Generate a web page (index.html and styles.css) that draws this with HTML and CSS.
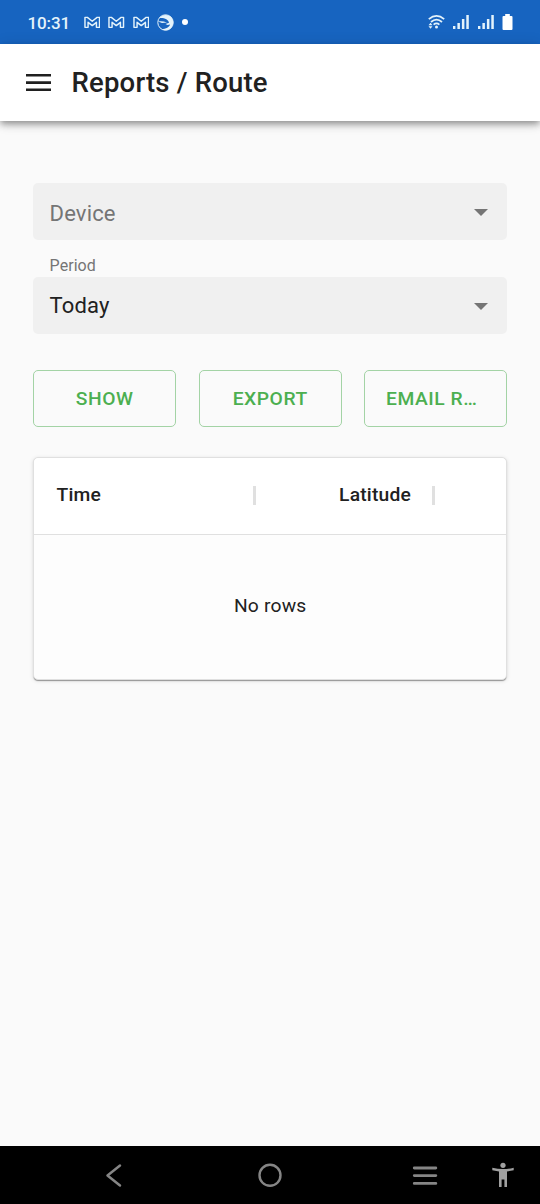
FILE: index.html
```
<!DOCTYPE html>
<html lang="en">
<head>
<meta charset="utf-8">
<title>Reports / Route</title>
<link rel="stylesheet" href="styles.css">
</head>
<body>
<div class="screen">
  <div class="status">
    <span class="clock">10:31</span>
    <div class="notifications">
      <svg class="mail" viewBox="0 0 17 13"><path d="M1 11.500V1.200h2.500l5 4 5-4H16v10.300h-3.200V6.300L8.500 9.700 4.200 6.300v5.200z"/></svg>
      <svg class="mail" viewBox="0 0 17 13"><path d="M1 11.500V1.200h2.500l5 4 5-4H16v10.300h-3.200V6.300L8.500 9.700 4.200 6.300v5.200z"/></svg>
      <svg class="mail" viewBox="0 0 17 13"><path d="M1 11.500V1.200h2.500l5 4 5-4H16v10.300h-3.200V6.300L8.500 9.700 4.200 6.300v5.200z"/></svg>
      <svg class="globe" viewBox="0 0 17 17"><circle cx="8.500" cy="8.500" r="7.700" fill="none" stroke="#e4f3fb" stroke-width="1"/><path d="M2.500 4C5 .5 11 0 14.500 3.500 17.500 7.500 16.500 12 13 15 10.500 16.800 7 16.600 4.500 15 9 15 12.500 13 13 10.500L10.500 11 8.500 10 12 8.800C11.500 5.200 7 3.500 2.500 4z" fill="#e4f3fb"/><path d="M1 7.500Q5 6.700 10 8.500L5 9z" fill="#e4f3fb"/></svg>
      <span class="dot"></span>
    </div>
    <div class="system">
      <svg class="wifi" viewBox="0 0 17 16"><g fill="none" stroke="#e4f3fb" stroke-width="1.800"><path d="M.8 5.100Q8.500-1.300 16.200 5.100"/><path d="M3 8Q8.500 3.300 14 8"/><path d="M5.600 10.600Q8.500 8.200 11.400 10.600"/></g><circle cx="8.500" cy="13" r="1.500" fill="#e4f3fb"/><path d="M2.500 8.700l2 2.500h-4zM2.500 14.800l-2-2.500h4z" fill="#e4f3fb"/></svg>
      <svg class="signal" viewBox="0 0 17 16"><path d="M0 12h2.400v3H0zM4.400 9h2.500v6H4.400zM8.900 5h2.500v10H8.900zM13.300 1h2.500v14h-2.500z"/></svg>
      <svg class="signal second" viewBox="0 0 17 16"><path d="M0 12h2.400v3H0zM4.400 9h2.500v6H4.400zM8.900 5h2.500v10H8.900zM13.300 1h2.500v14h-2.500z"/></svg>
      <svg class="battery" viewBox="0 0 11 18"><path d="M3.200 1h4.600v2H9.500q1 0 1 1v12q0 1-1 1h-8q-1 0-1-1V4q0-1 1-1h1.700z" fill="#fff"/></svg>
    </div>
  </div>
  <header class="appbar">
    <svg class="menu" viewBox="0 0 26 18"><path d="M0 0h25v2.600H0zM0 7.300h25v2.600H0zM0 14.500h25v2.600H0z" fill="#202020"/></svg>
    <h1 class="title">Reports / Route</h1>
  </header>
  <main class="content">
    <div class="field device"><span class="placeholder">Device</span><svg class="caret" viewBox="0 0 14 7"><path d="M0 0h14L7 7z"/></svg></div>
    <div class="label">Period</div>
    <div class="field period"><span>Today</span><svg class="caret" viewBox="0 0 14 7"><path d="M0 0h14L7 7z"/></svg></div>
    <div class="actions">
      <button class="button"><span class="caption">Show</span></button>
      <button class="button"><span class="caption">Export</span></button>
      <button class="button clipped"><span class="caption">Email R…</span></button>
    </div>
    <section class="card">
      <div class="columns">
        <div class="column time">Time<span class="separator"></span></div>
        <div class="column latitude">Latitude<span class="separator"></span></div>
      </div>
      <div class="empty">No rows</div>
    </section>
  </main>
  <nav class="navbar">
    <svg class="nav-icons" viewBox="0 0 540 58">
      <path d="M120 19.500l-12.500 10L120 39.500" fill="none" stroke="#858585" stroke-width="2.500" stroke-linecap="round" stroke-linejoin="round"/>
      <circle cx="270" cy="29.300" r="10.500" fill="none" stroke="#858585" stroke-width="2.400"/>
      <path d="M414.300 22h21.500M414.300 29.600h21.500M414.300 37.400h21.500" fill="none" stroke="#858585" stroke-width="2.900" stroke-linecap="round"/>
      <g fill="#a0a0a0"><circle cx="503" cy="19.300" r="2.600"/><path d="M492.300 21.700Q503 24.500 513.700 21.700V24.200L507 25.500V41h-2.600v-7.500h-2.800V41H499V25.500L492.300 24.200z"/></g>
    </svg>
  </nav>
</div>
</body>
</html>
```
FILE: styles.css
```
* { box-sizing: border-box; }
body { margin: 0; font-family: Roboto, sans-serif; color: #212121; background: #fafafa; }
svg { display: block; flex: none; }
.screen { width: 540px; height: 1204px; display: flex; flex-direction: column; overflow: hidden; }
.status { height: 44px; flex: none; background: #1764c0; color: #e4f3fb; display: flex; align-items: center; padding: 0 27.500px; }
.clock { width: 56px; font-size: 17px; line-height: 20px; letter-spacing: -.1px; font-weight: 500; padding-top: 1px; }
.notifications { display: flex; align-items: center; gap: 8px; }
.mail { width: 16.500px; height: 13px; }
.mail path { fill: none; stroke: #e4f3fb; stroke-width: 1.500; stroke-linejoin: round; }
.globe { width: 17px; height: 17px; margin-left: -.5px; }
.dot { width: 6px; height: 6px; border-radius: 50%; background: #fff; }
.system { display: flex; align-items: center; margin-left: auto; }
.wifi { width: 17px; height: 16px; margin-right: 8px; }
.signal { width: 17px; height: 16px; }
.signal path { fill: #e4f3fb; }
.second { margin: 0 7px 0 8px; }
.battery { width: 11px; height: 18px; }
.appbar { height: 77px; flex: none; display: flex; align-items: center; padding-left: 26px; background: #fff; box-shadow: 0 3px 6px -1px rgba(0,0,0,.28), 0 5px 7px rgba(0,0,0,.14), 0 1px 14px rgba(0,0,0,.12); }
.menu { width: 26px; height: 18px; margin-right: 19.500px; }
.title { margin: 0; font-size: 27.500px; line-height: 36px; font-weight: 500; letter-spacing: .2px; }
.content { flex: 1; padding: 62px 32.600px 0 33px; }
.field { height: 57px; border-radius: 5px; background: #f0f0f0; display: flex; align-items: center; justify-content: space-between; padding: 0 19px 0 16.600px; font-size: 22px; line-height: 32px; letter-spacing: .15px; }
.device { padding-top: 4px; }
.device .caret { margin-bottom: 3px; }
.period { padding-top: 1px; }
.placeholder { color: #757575; }
.caret { width: 14px; height: 7px; fill: #757575; }
.label { height: 37px; padding: 16px 16.600px 0; font-size: 16px; line-height: 20px; letter-spacing: .05px; color: #757575; }
.actions { display: grid; grid-template-columns: repeat(3, 143.400px); justify-content: space-between; margin-top: 36px; }
.button { height: 57px; padding: 0 20px; border: 1px solid #a3d3a5; border-radius: 5px; background: transparent; color: #4caf50; font: 500 19.250px/30px Roboto, sans-serif; letter-spacing: .55px; text-transform: uppercase; }
.clipped { padding: 0 20px 0 21px; text-align: left; }
.caption { display: block; white-space: nowrap; }
.card { height: 223px; margin-top: 30px; border: 1px solid #e0e0e0; border-radius: 5px; background: #fdfdfd; box-shadow: 0 2px 1px -1px rgba(0,0,0,.25), 0 1px 1px rgba(0,0,0,.14), 0 1px 4px rgba(0,0,0,.12); }
.columns { display: flex; height: 77px; border-bottom: 1px solid #e0e0e0; border-radius: 5px 5px 0 0; background: #fff; font-size: 19.250px; font-weight: 500; letter-spacing: .2px; padding-bottom: 3px; }
.column { display: flex; align-items: center; }
.time { width: 222px; padding-left: 22.500px; justify-content: space-between; }
.latitude { width: 178.500px; justify-content: flex-end; gap: 20.500px; }
.separator { width: 3px; height: 19px; margin-top: 2px; background: #e0e0e0; }
.empty { height: 144px; padding-bottom: 3px; display: flex; align-items: center; justify-content: center; font-size: 19.250px; letter-spacing: .2px; }
.navbar { height: 58px; flex: none; background: #000; }
.nav-icons { width: 540px; height: 58px; }
```
